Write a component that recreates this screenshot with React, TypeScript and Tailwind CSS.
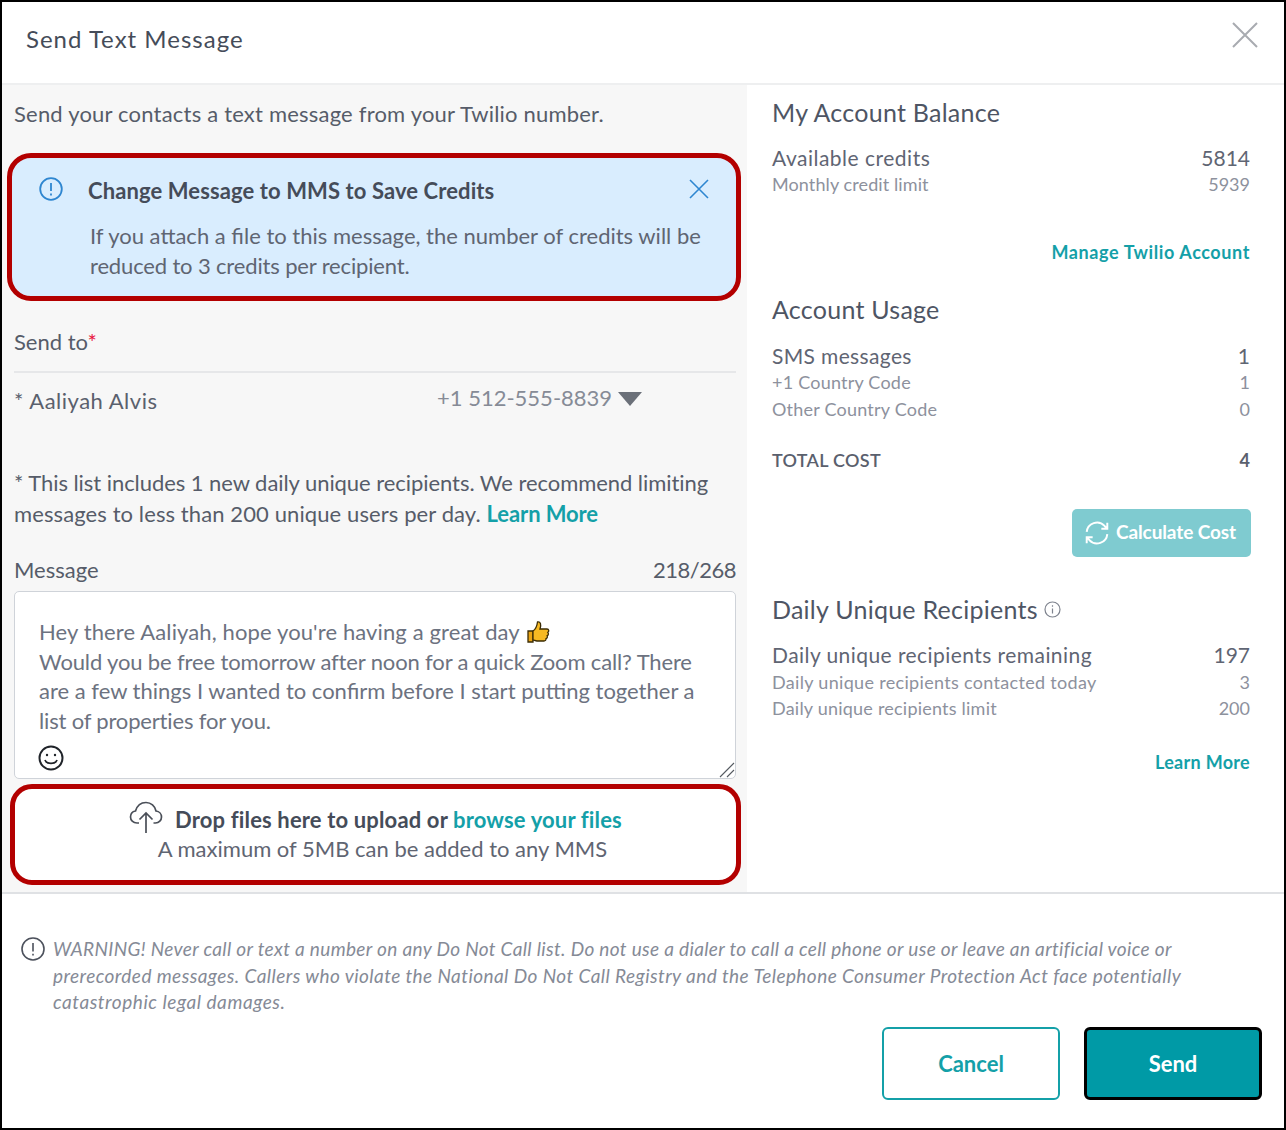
import React from "react";

const Row = ({ label, value, big, track }: { label: string; value: string; big?: boolean; track?: string }) => (
  <div className={big ? "flex justify-between items-center h-[28.5px] text-[21px] text-[#5f6573]" : "flex justify-between items-center h-[26.5px] text-[18px] text-[#8d919d]"}>
    <span className={track ?? (big ? "tracking-[0.5px]" : "tracking-[0.22px]")}>{label}</span>
    <span>{value}</span>
  </div>
);

const Heading = ({ children, className = "" }: { children: React.ReactNode; className?: string }) => (
  <div className={`h-[32px] flex items-center text-[25px] text-[#4e5564] tracking-[0.25px] ${className}`}>{children}</div>
);

export default function App() {
  return (
    <div className="w-[1286px] h-[1130px] border-2 border-black bg-white flex flex-col overflow-hidden font-['Lato','Liberation_Sans',sans-serif]">
      <header className="h-[83px] shrink-0 border-b-2 border-[#eeeff0] flex items-center justify-between pl-[24px] pr-[26px]">
        <h1 className="text-[24px] text-[#454c59] -mt-[8px] tracking-[1px]">Send Text Message</h1>
        <svg width="26" height="26" viewBox="0 0 26 26" className="-mt-[15px]" fill="none" stroke="#a8abb0" strokeWidth="2">
          <path d="M1 1 25 25M25 1 1 25" />
        </svg>
      </header>

      <main className="h-[809px] shrink-0 flex border-b-2 border-[#dfe1e4]">
        <section className="w-[745px] bg-[#f7f7f7] pl-[12px] pr-[11px] text-[22px] text-[#565c69]">
          <p className="h-[30px] mt-[14px] leading-[30px] tracking-[0.2px] whitespace-nowrap">Send your contacts a text message from your Twilio number.</p>

          <div className="mt-[24px] -ml-[7px] -mr-[5px] h-[148px] rounded-[24px] border-[5px] border-[#b30000] bg-[#d9edfe] pl-[27px] pr-[27px] pt-[17px]">
            <div className="flex items-center justify-between h-[30px]">
              <div className="flex items-center">
                <svg width="24" height="24" viewBox="0 0 24 24" fill="none" stroke="#2e86d0" strokeWidth="1.8" className="-mt-[3px]">
                  <circle cx="12" cy="12" r="10.8" />
                  <path d="M12 6v8M12 16.6v1.8" />
                </svg>
                <span className="ml-[25px] font-bold text-[22px] text-[#454c59] tracking-[0.1px]">Change Message to MMS to Save Credits</span>
              </div>
              <svg width="20" height="20" viewBox="0 0 20 20" fill="none" stroke="#2e86d0" strokeWidth="1.6" className="-mt-[3px]">
                <path d="M1 1 19 19M19 1 1 19" />
              </svg>
            </div>
            <p className="ml-[51px] mt-[16px] leading-[30px] text-[#5f6572] whitespace-nowrap">
              If you attach a file to this message, the number of credits will be
              <br />
              <span className="tracking-[-0.15px]">reduced to 3 credits per recipient.</span>
            </p>
          </div>

          <div className="mt-[26px] h-[30px] leading-[30px]">
            Send to<span className="text-[#e8173f]">*</span>
          </div>
          <div className="mt-[14px] h-[2px] bg-[#e6e7e9]" />
          <div className="mt-[13px] h-[30px] flex">
            <span className="w-[423px] leading-[30px] text-[#5a606d] tracking-[0.5px]">* Aaliyah Alvis</span>
            <span className="leading-[24px] text-[#868b96] flex items-center h-[24px]">
              +1 512-555-8839
              <svg width="24" height="14" viewBox="0 0 24 14" className="ml-[6px] mt-[2px]">
                <path d="M0 0H24L12 14Z" fill="#6b7079" />
              </svg>
            </span>
          </div>

          <p className="mt-[51px] leading-[31px] whitespace-nowrap">
            <span className="tracking-[-0.055px]">* This list includes 1 new daily unique recipients. We recommend limiting</span>
            <br />
            <span className="tracking-[0.1px]">messages to less than 200 unique users per day. </span>
            <span className="font-bold text-[#14a0a8] tracking-[-0.1px]">Learn More</span>
          </p>

          <div className="mt-[26px] h-[30px] leading-[30px] flex justify-between">
            <span>Message</span>
            <span className="tracking-[-0.5px]">218/268</span>
          </div>

          <div className="mt-[6px] h-[188px] rounded-[5px] border border-[#cfd3d9] bg-white relative pl-[24px] pt-[25px] text-[#6c7280]">
            <p className="leading-[29.7px] whitespace-nowrap">
              <span className="inline-flex items-center tracking-[0.12px]">
                Hey there Aaliyah, hope you're having a great day
                <svg width="24" height="26" viewBox="0 0 24 24" className="ml-[6px]">
                  <path d="M2 11h5v11H2z" fill="#e9a415" stroke="#3b2c05" strokeWidth="1.3" />
                  <path d="M7 11c3-2 4-5 4.5-9 3-.6 4 2.5 2.500 7H21c2 0 2.300 2.500.8 3.400 1 1.200.6 2.800-.6 3.300.5 1.300 0 2.700-1.200 3 .2 1.500-.8 2.300-2 2.300H11c-2 0-2.500-1-4-1z" fill="#f7b922" stroke="#3b2c05" strokeWidth="1.3" />
                </svg>
              </span>
              <br />
              <span className="tracking-[-0.14px]">Would you be free tomorrow after noon for a quick Zoom call? There</span>
              <br />
              are a few things I wanted to confirm before I start putting together a
              <br />
              <span className="tracking-[-0.17px]">list of properties for you.</span>
            </p>
            <svg width="26" height="26" viewBox="0 0 26 26" fill="none" stroke="#20242a" strokeWidth="2" className="absolute left-[23px] top-[153px]">
              <circle cx="13" cy="13" r="11.500" />
              <circle cx="9" cy="10" r="1.200" fill="#20242a" stroke="none" />
              <circle cx="17" cy="10" r="1.200" fill="#20242a" stroke="none" />
              <path d="M7 15c1.500 4.500 10.500 4.500 12 0" strokeWidth="1.800" />
            </svg>
            <svg width="16" height="16" viewBox="0 0 16 16" fill="none" stroke="#555a61" strokeWidth="1.100" className="absolute right-0 bottom-0">
              <path d="M1 15 15 1M8 15 15 8" />
            </svg>
          </div>

          <div className="mt-[5px] -ml-[4px] -mr-[5px] h-[101px] rounded-[22px] border-[5px] border-[#b30000] bg-white flex flex-col items-center pt-[15px] text-center">
            <div className="flex items-center h-[30px]">
              <svg width="34" height="34" viewBox="0 0 34 34" fill="none" stroke="#4a4f58" strokeWidth="1.700" className="mr-[12px] -mt-[4px]">
                <path d="M10 23H8C4 23 1.500 20 1.500 17c0-3 2-5.500 5-6C8 6 12 2.500 17 2.500S26 6 27 11c3.200.3 5.500 3 5.500 6 0 3.200-2.500 6-6 6h-2" />
                <path d="M17 33V13M10.500 19.500 17 13l6.500 6.500" />
              </svg>
              <span className="font-bold text-[22px] text-[#454c59] tracking-[0.15px]">
                Drop files here to upload or <span className="text-[#14a0a8]">browse your files</span>
              </span>
            </div>
            <div className="h-[30px] leading-[30px] text-[#5f6572] ml-[14px]">A maximum of 5MB can be added to any MMS</div>
          </div>
        </section>

        <aside className="flex-1 pl-[25px] pr-[34px] bg-white">
          <Heading className="mt-[12px]">My Account Balance</Heading>
          <div className="mt-[14px]">
            <Row big label="Available credits" value="5814" />
            <Row label="Monthly credit limit" value="5939" track="tracking-[0.1px]" />
          </div>
          <div className="mt-[40px] h-[28px] flex items-center justify-end text-[18px] font-bold text-[#14a0a8] tracking-[0.6px]">Manage Twilio Account</div>

          <Heading className="mt-[28px]">Account Usage</Heading>
          <div className="mt-[15px]">
            <Row big label="SMS messages" value="1" track="tracking-[0.35px]" />
            <Row label="+1 Country Code" value="1" />
            <Row label="Other Country Code" value="0" />
          </div>
          <div className="mt-[25px] h-[26px] flex justify-between items-center text-[18px] font-bold text-[#5a606d]">
            <span className="font-semibold tracking-[0.3px]">TOTAL COST</span>
            <span>4</span>
          </div>

          <div className="mt-[35px] -mr-[1px] flex justify-end">
            <div className="w-[179px] h-[48px] rounded-[5px] bg-[#7fcbd0] text-white font-bold text-[19px] flex items-center justify-center tracking-[-0.1px]">
              <svg width="26" height="26" viewBox="0 0 24 24" fill="none" stroke="#ffffff" strokeWidth="1.800" className="mr-[6px] -ml-[3px]">
                <path d="M2.500 11A9.500 9.500 0 0 1 19 5.500L21.500 8M21.500 2.500V8H16" />
                <path d="M21.500 13A9.500 9.500 0 0 1 5 18.500L2.500 16M2.500 21.500V16H8" />
              </svg>
              Calculate Cost
            </div>
          </div>

          <Heading className="mt-[37px]">
            Daily Unique Recipients
            <svg width="17" height="17" viewBox="0 0 17 17" fill="none" stroke="#7e838e" strokeWidth="1.200" className="ml-[6px]">
              <circle cx="8.500" cy="8.500" r="7.500" />
              <path d="M8.500 7.500v5M8.500 4.200v1.500" />
            </svg>
          </Heading>
          <div className="mt-[15px]">
            <Row big label="Daily unique recipients remaining" value="197" track="tracking-[0.44px]" />
            <Row label="Daily unique recipients contacted today" value="3" track="tracking-[0.32px]" />
            <Row label="Daily unique recipients limit" value="200" />
          </div>
          <div className="mt-[26px] h-[28px] flex items-center justify-end text-[18px] font-bold text-[#14a0a8] tracking-[0.3px]">Learn More</div>
        </aside>
      </main>

      <footer className="flex-1 pl-[19px] pr-[22px]">
        <div className="flex mt-[42px]">
          <svg width="24" height="24" viewBox="0 0 24 24" fill="none" stroke="#4c515c" strokeWidth="1.600" className="shrink-0 mt-[1px]">
            <circle cx="12" cy="12" r="11" />
            <path d="M12 6v8.500M12 16.800v1.800" />
          </svg>
          <p className="ml-[8px] italic text-[19px] leading-[26.5px] text-[#858a96] whitespace-nowrap">
            <span className="tracking-[0.34px]">WARNING! Never call or text a number on any Do Not Call list. Do not use a dialer to call a cell phone or use or leave an artificial voice or</span>
            <br />
            <span className="tracking-[0.43px]">prerecorded messages. Callers who violate the National Do Not Call Registry and the Telephone Consumer Protection Act face potentially</span>
            <br />
            <span className="tracking-[0.55px]">catastrophic legal damages.</span>
          </p>
        </div>
        <div className="flex justify-end gap-[24px] mt-[11px]">
          <div className="w-[178px] h-[73px] rounded-[6px] border-2 border-[#14a0a8] text-[#14a0a8] font-bold text-[22px] flex items-center justify-center">Cancel</div>
          <div className="w-[178px] h-[73px] rounded-[6px] border-[3px] border-black bg-[#009aa6] text-white font-bold text-[22px] flex items-center justify-center">Send</div>
        </div>
      </footer>
    </div>
  );
}
